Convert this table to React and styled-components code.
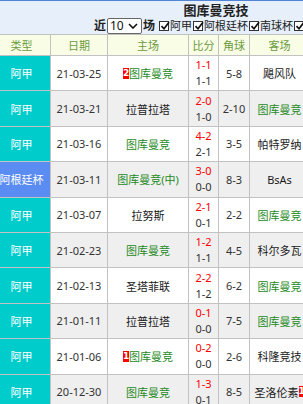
import React from "react";
import styled, { createGlobalStyle } from "styled-components";

const Global = createGlobalStyle`
  html, body { margin: 0; padding: 0; background: #fff; overflow: hidden; }
  * { box-sizing: border-box; }
`;

const Page = styled.div`
  width: 446px;
  margin-left: -7px;
  font-family: "Noto Sans", "Noto Sans CJK SC", sans-serif;
  font-size: 11px;
  color: #333;
`;

const TopBar = styled.div`
  height: 34px;
  border-top: 1px solid #4f87d6;
  background: #e6effa;
  display: flex;
  flex-direction: column;
  align-items: center;
`;

const Title = styled.div`
  height: 16px;
  line-height: 18px;
  font-size: 13px;
  font-weight: bold;
  color: #222;
`;

const Filter = styled.div`
  height: 17px;
  display: flex;
  align-items: center;
  font-size: 11px;
  color: #222;
`;

const Strong = styled.span`
  font-size: 12px;
  font-weight: bold;
  line-height: 16px;
`;

const SelectBox = styled.div`
  width: 35px;
  height: 16px;
  margin: 0 1px 0 1px;
  border: 1px solid #666;
  border-radius: 2px;
  background: #fff;
  display: flex;
  align-items: center;
  justify-content: space-between;
  padding: 0 3px 0 2px;
  font-size: 12px;
  line-height: 14px;
  color: #111;
`;

const Check = styled.span`
  width: 10px;
  height: 10px;
  margin-left: ${(p) => (p.$first ? "4px" : "1px")};
  border: 1px solid #333;
  background: #fff;
  display: inline-flex;
  align-items: center;
  justify-content: center;
  position: relative;
`;

const Label = styled.span`
  line-height: 16px;
  margin-left: 1px;
`;

const Row = styled.div`
  display: grid;
  grid-template-columns: 58px 57px 81px 30px 31px 60px 1fr;
  height: ${(p) => (p.$head ? "22px" : "35.4px")};
  border-top: ${(p) => (p.$head ? "1px solid #c2c2c2" : "none")};
  border-bottom: 1px solid #c2c2c2;
  background: ${(p) => (p.$head ? "#fafde6" : p.$alt ? "#efefef" : "#fff")};
`;

const Cell = styled.div`
  border-right: 1px solid #c2c2c2;
  display: flex;
  align-items: center;
  justify-content: center;
  white-space: nowrap;
  overflow: hidden;
  color: ${(p) => p.$color || "#333"};
  background: ${(p) => p.$bg || "transparent"};
  font-size: 11px;
`;

const HeadCell = styled(Cell)`
  color: #6a9b40;
  font-size: 11px;
`;

const Team = styled.span`
  color: ${(p) => (p.$home ? "#1e8a1e" : "#1a1a1a")};
  display: inline-flex;
  align-items: center;
`;

const Badge = styled.span`
  display: inline-block;
  width: 6px;
  height: 11px;
  background: #ff0000;
  color: #fff;
  font-family: "DejaVu Sans", sans-serif;
  font-size: 9px;
  font-weight: bold;
  line-height: 11px;
  text-align: center;
  overflow: hidden;
`;

const ScoreCell = styled(Cell)`
  flex-direction: column;
`;

const ScoreLine = styled.div`
  line-height: 16px;
  color: ${(p) => (p.$full ? "#ff0000" : "#333")};
`;

const CheckIcon = () => (
  <svg width="10" height="10" viewBox="0 0 10 10" style={{ position: "absolute", left: 0, top: -1 }}>
    <path d="M1.5 5.2 L4 7.8 L9 1.2" fill="none" stroke="#111" strokeWidth="1.7" />
  </svg>
);

const Chevron = () => (
  <svg width="10" height="6" viewBox="0 0 10 6">
    <path d="M1 1 L5 5 L9 1" fill="none" stroke="#111" strokeWidth="1.6" />
  </svg>
);

const TEAM = "图库曼竞";
const rows = [
  { type: "阿甲", date: "21-03-25", home: TEAM, hb: "2", full: "1-1", half: "1-1", corner: "5-8", away: "飓风队", res: "平" },
  { type: "阿甲", date: "21-03-21", home: "拉普拉塔", full: "2-0", half: "1-0", corner: "2-10", away: TEAM, res: "负" },
  { type: "阿甲", date: "21-03-16", home: TEAM, full: "4-2", half: "2-1", corner: "3-5", away: "帕特罗纳", res: "胜" },
  { type: "阿根廷杯", cup: true, date: "21-03-11", home: TEAM, neutral: true, full: "3-0", half: "0-0", corner: "8-3", away: "BsAs", res: "胜" },
  { type: "阿甲", date: "21-03-07", home: "拉努斯", full: "2-1", half: "0-1", corner: "2-2", away: TEAM, res: "负" },
  { type: "阿甲", date: "21-02-23", home: TEAM, full: "1-2", half: "1-1", corner: "4-5", away: "科尔多瓦", res: "负" },
  { type: "阿甲", date: "21-02-13", home: "圣塔菲联", full: "2-2", half: "1-2", corner: "6-2", away: TEAM, res: "平" },
  { type: "阿甲", date: "21-01-11", home: "拉普拉塔", full: "0-1", half: "0-0", corner: "7-5", away: TEAM, res: "胜" },
  { type: "阿甲", date: "21-01-06", home: TEAM, hb: "1", full: "0-2", half: "0-0", corner: "2-6", away: "科隆竞技", res: "负" },
  { type: "阿甲", date: "20-12-30", home: TEAM, full: "1-3", half: "0-1", corner: "8-5", away: "圣洛伦素", ab: "1", res: "负" },
];

const leagues = ["阿甲", "阿根廷杯", "南球杯", "阿超杯"];

export default function App() {
  return (
    <>
      <Global />
      <Page>
        <TopBar>
          <Title>图库曼竞技</Title>
          <Filter>
            <Strong>近</Strong>
            <SelectBox>
              <span>10</span>
              <Chevron />
            </SelectBox>
            <Strong>场</Strong>
            {leagues.map((l, i) => (
              <React.Fragment key={l}>
                <Check $first={i === 0}>
                  <CheckIcon />
                </Check>
                <Label>{l}</Label>
              </React.Fragment>
            ))}
          </Filter>
        </TopBar>
        <Row $head>
          <HeadCell>类型</HeadCell>
          <HeadCell>日期</HeadCell>
          <HeadCell>主场</HeadCell>
          <HeadCell>比分</HeadCell>
          <HeadCell>角球</HeadCell>
          <HeadCell>客场</HeadCell>
          <HeadCell>胜负</HeadCell>
        </Row>
        {rows.map((r, i) => (
          <Row key={i} $alt={i % 2 === 1}>
            <Cell $bg={r.cup ? "#5b8cf2" : "#00cccc"} $color="#fff">
              {r.type}
            </Cell>
            <Cell>{r.date}</Cell>
            <Cell>
              <Team $home={r.home === TEAM}>
                {r.hb && <Badge>{r.hb}</Badge>}
                {r.home}
                {r.neutral && "(中)"}
              </Team>
            </Cell>
            <ScoreCell>
              <ScoreLine $full>{r.full}</ScoreLine>
              <ScoreLine>{r.half}</ScoreLine>
            </ScoreCell>
            <Cell>{r.corner}</Cell>
            <Cell>
              <Team $home={r.away === TEAM}>
                {r.away}
                {r.ab && <Badge>{r.ab}</Badge>}
              </Team>
            </Cell>
            <Cell>{r.res}</Cell>
          </Row>
        ))}
      </Page>
    </>
  );
}
